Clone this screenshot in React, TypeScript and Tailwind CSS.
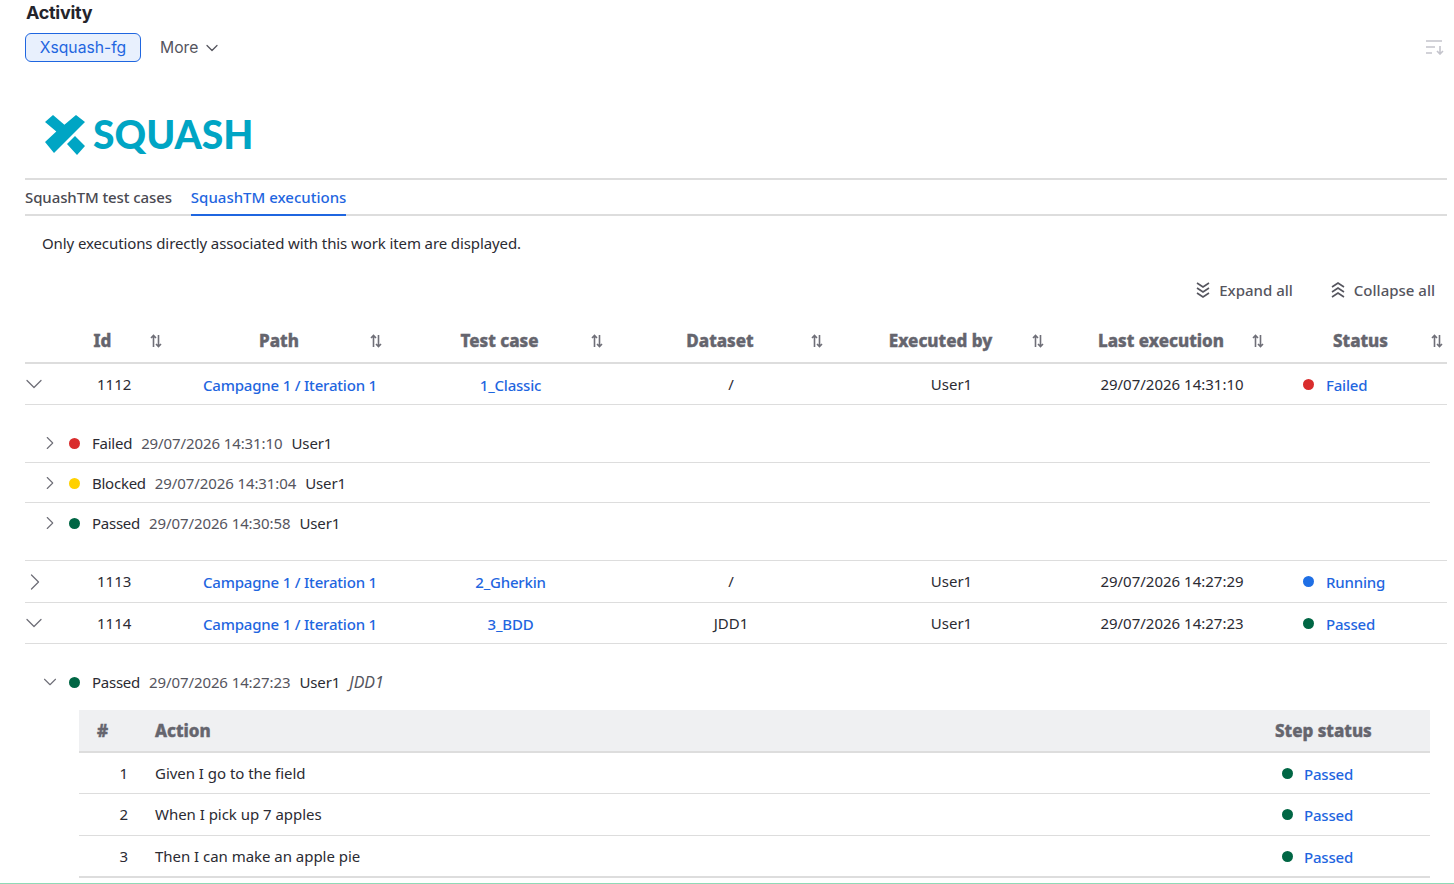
import { ChevronDown, ChevronRight } from 'lucide-react'

const rowGrid = 'grid grid-cols-[22px_133px_220px_221px_220px_221px_220px_165px] items-center'
const linkText = 'pt-[2px] font-medium tracking-[-0.2px] text-[#1f66e0]'
const headText = 'text-[17px] font-extrabold text-[#65656e] [-webkit-text-stroke:0.4px_#65656e]'
const dotColors = {
  Failed: 'bg-[#d92d2d]',
  Blocked: 'bg-[#ffd100]',
  Passed: 'bg-[#006644]',
  Running: 'bg-[#1f6fe5]',
}

type Status = keyof typeof dotColors

function Dot({ status }: { status: Status }) {
  return <span className={`size-[11px] shrink-0 rounded-full ${dotColors[status]}`} />
}

function SortIcon() {
  return (
    <svg width="12" height="14" viewBox="0 0 12 14" fill="none" stroke="#6f6f78" strokeWidth="1.6" className="shrink-0">
      <path d="M3.5 13V1.5M1 4l2.5-2.5L6 4M8.5 1v11.5M6 10l2.5 2.5L11 10" />
    </svg>
  )
}

function StackedChevrons({ up }: { up?: boolean }) {
  return (
    <svg width="16" height="18" viewBox="0 0 16 18" fill="none" stroke="#55555e" strokeWidth="1.6" className={up ? 'rotate-180' : ''}>
      <path d="M2 2l6 4 6-4M2 7l6 4 6-4M2 12l6 4 6-4" />
    </svg>
  )
}

function HeaderCell({ label, className }: { label: string; className?: string }) {
  return (
    <div className={`flex items-center ${className ?? 'pr-[18px]'}`}>
      <span className={`flex-1 text-center ${headText}`}>{label}</span>
      <span className="-ml-2">
        <SortIcon />
      </span>
    </div>
  )
}

function ExecutionRow({ id, testCase, dataset, user, date, status, open, height }: {
  id: string
  testCase: string
  dataset: string
  user: string
  date: string
  status: Status
  open?: boolean
  height: string
}) {
  return (
    <div className={`${rowGrid} ${height} border-b border-[#dddddd] text-[15px] text-[#2b2b33]`}>
      <div className="text-[#6f6f78]">
        {open ? <ChevronDown size={28} strokeWidth={1.1} className="-ml-[5px]" /> : <ChevronRight size={28} strokeWidth={1.1} className="-ml-[4px]" />}
      </div>
      <div className="pl-[50px]">{id}</div>
      <a className={`text-center ${linkText}`}>Campagne 1 / Iteration 1</a>
      <a className={`text-center ${linkText}`}>{testCase}</a>
      <div className="text-center">{dataset}</div>
      <div className="text-center">{user}</div>
      <div className="text-center">{date}</div>
      <div className="flex items-center gap-3 pl-[21px]">
        <Dot status={status} />
        <a className={linkText}>{status}</a>
      </div>
    </div>
  )
}

function Attempt({ status, date, user, dataset, open }: { status: Status; date: string; user: string; dataset?: string; open?: boolean }) {
  return (
    <div className="flex items-center text-[15px] text-[#2b2b33]">
      <span className="w-[44px] pl-[14px] text-[#6f6f78]">
        {open ? <ChevronDown size={22} strokeWidth={1.2} /> : <ChevronRight size={22} strokeWidth={1.2} />}
      </span>
      <Dot status={status} />
      <span className="ml-3 tracking-[-0.25px]">{status}</span>
      <span className="ml-[9px] tracking-[-0.1px] text-[#55555e]">{date}</span>
      <span className="ml-[9px] tracking-[-0.1px]">{user}</span>
      {dataset && <span className="ml-[9px] text-[16px] italic text-[#55555e]">{dataset}</span>}
    </div>
  )
}

function StepRow({ n, action, height, border }: { n: number; action: string; height: string; border: string }) {
  return (
    <div className={`flex items-center ${height} ${border} border-[#dddddd] text-[15px] text-[#2b2b33]`}>
      <span className="w-[76px] pr-[27px] text-right">{n}</span>
      <span className="flex-1 tracking-[-0.03px]">{action}</span>
      <span className="flex w-[148px] items-center gap-[11px]">
        <Dot status="Passed" />
        <a className={linkText}>Passed</a>
      </span>
    </div>
  )
}

export default function App() {
  return (
    <div className="flex h-[884px] flex-col overflow-hidden bg-white font-['Noto_Sans',sans-serif]">
      <div className="flex-1 pl-[25px] pr-[7px]">
        <h1 className="h-[26px] pl-px font-['Inter',sans-serif] text-[18px] leading-[26px] font-bold tracking-[-0.3px] text-[#24242c]">Activity</h1>
        <div className="mt-[7px] flex h-[29px] items-center font-['Inter',sans-serif] text-[15.7px]">
          <span className="flex h-full w-[116px] items-center justify-center rounded-md border border-[#1f66e0] bg-[#e8f0fd] text-[#1f66e0]">Xsquash-fg</span>
          <span className="ml-[19px] text-[#55555e]">More</span>
          <ChevronDown size={20} strokeWidth={1.5} className="ml-[4px] text-[#55555e]" />
          <svg width="20" height="16" viewBox="0 0 20 16" fill="none" stroke="#c4c4cc" strokeWidth="1.6" className="mr-[2px] mb-[2px] ml-auto">
            <path d="M1 2h16M1 8h9M1 14h6M15 7v8M12 12l3 3 3-3" />
          </svg>
        </div>

        <div className="mt-[53px] flex h-[40px] items-center pl-[19px]">
          <svg width="41" height="40" viewBox="0 0 41 40" fill="#00a5c4">
            <path d="M9 0 20.4 9.7 32 0 41 7 10 38 1 27 12.3 16.6 1 7ZM31 21 41 31 33 40 23 29Z" />
          </svg>
          <span className="ml-2 pb-[2px] font-['Lato',sans-serif] text-[39px] leading-none font-black text-[#00a5c4]">SQUASH</span>
        </div>

        <div className="mt-[23px] flex h-[38px] border-y-2 border-[#dddddd] text-[15px] font-medium">
          <span className="flex h-[35px] items-center tracking-[-0.1px] text-[#4a4a52]">SquashTM test cases</span>
          <span className="ml-[19px] flex h-[36px] items-center border-b-2 border-[#1f66e0] text-[#1f66e0]">SquashTM executions</span>
        </div>

        <p className="mt-[15px] pl-[17px] text-[15px] leading-[24px] tracking-[-0.1px] text-[#2b2b33]">Only executions directly associated with this work item are displayed.</p>

        <div className="mt-[23px] flex h-[24px] items-center justify-end gap-[37px] pr-[12px] text-[15px] font-medium text-[#55555e]">
          <span className="flex items-center gap-2"><StackedChevrons />Expand all</span>
          <span className="flex items-center gap-2"><StackedChevrons up />Collapse all</span>
        </div>

        <div className={`${rowGrid} mt-[18px] h-[44px] border-b-2 border-[#dddddd]`}>
          <div />
          <HeaderCell label="Id" />
          <HeaderCell label="Path" />
          <HeaderCell label="Test case" />
          <HeaderCell label="Dataset" />
          <HeaderCell label="Executed by" />
          <HeaderCell label="Last execution" />
          <HeaderCell label="Status" className="pr-[4px]" />
        </div>

        <ExecutionRow id="1112" testCase="1_Classic" dataset="/" user="User1" date="29/07/2026 14:31:10" status="Failed" open height="h-[41px]" />

        <div className="pr-[17px] pt-[18px]">
          <div className="flex h-[40px] items-center border-b border-[#dddddd] pt-px"><Attempt status="Failed" date="29/07/2026 14:31:10" user="User1" /></div>
          <div className="flex h-[40px] items-center border-b border-[#dddddd] pt-px"><Attempt status="Blocked" date="29/07/2026 14:31:04" user="User1" /></div>
          <div className="flex h-[40px] items-center"><Attempt status="Passed" date="29/07/2026 14:30:58" user="User1" /></div>
        </div>

        <div className="mt-[17px] border-t border-[#dddddd]" />
        <ExecutionRow id="1113" testCase="2_Gherkin" dataset="/" user="User1" date="29/07/2026 14:27:29" status="Running" height="h-[42px]" />
        <ExecutionRow id="1114" testCase="3_BDD" dataset="JDD1" user="User1" date="29/07/2026 14:27:23" status="Passed" open height="h-[41px]" />

        <div className="pr-[17px] pt-[18px]">
          <div className="flex h-[40px] items-center"><Attempt status="Passed" date="29/07/2026 14:27:23" user="User1" dataset="JDD1" open /></div>
          <div className="mt-[8px] ml-[54px]">
            <div className={`flex h-[43px] items-center border-b-2 border-[#dddddd] bg-[#eff0f2] ${headText}`}>
              <span className="w-[76px] pl-[18px]">#</span>
              <span className="flex-1">Action</span>
              <span className="w-[155px]">Step status</span>
            </div>
            <StepRow n={1} action="Given I go to the field" height="h-[41px]" border="border-b" />
            <StepRow n={2} action="When I pick up 7 apples" height="h-[42px]" border="border-b" />
            <StepRow n={3} action="Then I can make an apple pie" height="h-[42px]" border="border-b-2" />
          </div>
        </div>
      </div>
      <div className="h-px shrink-0 bg-[#8fd9b6]" />
    </div>
  )
}
